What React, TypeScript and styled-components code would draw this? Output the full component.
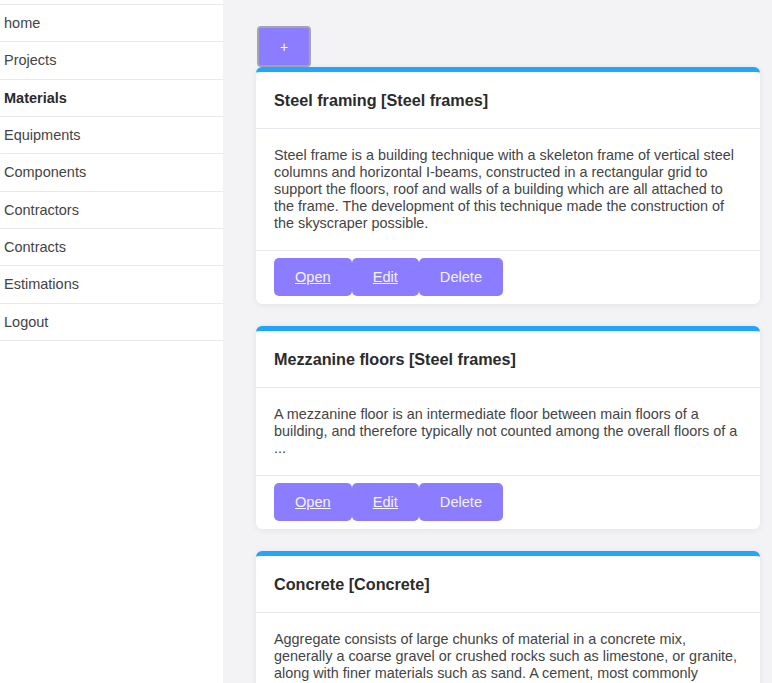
import styled, { createGlobalStyle } from 'styled-components';

const GlobalStyle = createGlobalStyle`
  html, body {
    margin: 0;
    padding: 0;
    height: 100%;
    overflow: hidden;
  }
  body {
    font-family: "Liberation Sans", Arial, sans-serif;
    background: #f3f3f6;
  }
`;

const navItems = [
  'home',
  'Projects',
  'Materials',
  'Equipments',
  'Components',
  'Contractors',
  'Contracts',
  'Estimations',
  'Logout',
];

const materials = [
  {
    name: 'Steel framing',
    category: 'Steel frames',
    text:
      'Steel frame is a building technique with a skeleton frame of vertical steel columns and horizontal I-beams, constructed in a rectangular grid to support the floors, roof and walls of a building which are all attached to the frame. The development of this technique made the construction of the skyscraper possible.',
  },
  {
    name: 'Mezzanine floors',
    category: 'Steel frames',
    text:
      'A mezzanine floor is an intermediate floor between main floors of a building, and therefore typically not counted among the overall floors of a ...',
  },
  {
    name: 'Concrete',
    category: 'Concrete',
    text:
      'Aggregate consists of large chunks of material in a concrete mix, generally a coarse gravel or crushed rocks such as limestone, or granite, along with finer materials such as sand. A cement, most commonly Portland cement, is the most prevalent kind of cement binder.',
  },
];

const App = () => {
  return (
    <>
      <GlobalStyle />
      <Layout>
        <Sidebar>
          {navItems.map((item) => (
            <NavItem key={item} $active={item === 'Materials'}>
              {item}
            </NavItem>
          ))}
        </Sidebar>

        <Main>
          <AddButton>+</AddButton>
          <CardList>
            {materials.map((m) => (
              <Card key={m.name}>
                <CardHeader>
                  {m.name} [{m.category}]
                </CardHeader>
                <CardBody>{m.text}</CardBody>
                <CardFooter>
                  <ActionButton as="a" href="#" $link>
                    Open
                  </ActionButton>
                  <ActionButton as="a" href="#" $link>
                    Edit
                  </ActionButton>
                  <ActionButton>Delete</ActionButton>
                </CardFooter>
              </Card>
            ))}
          </CardList>
        </Main>
      </Layout>
    </>
  );
};

const Layout = styled.div`
  display: flex;
  height: 683px;
  overflow: hidden;
`;

const Sidebar = styled.nav`
  width: 223px;
  flex-shrink: 0;
  background: #fff;
  padding-top: 4px;
  display: flex;
  flex-direction: column;
`;

const NavItem = styled.div<{ $active?: boolean }>`
  height: 36.33px;
  display: flex;
  align-items: center;
  padding-left: 4px;
  border-bottom: 1px solid #e9e9ed;
  font-size: 14.5px;
  color: ${(p) => (p.$active ? '#2b2b2b' : '#444')};
  font-weight: ${(p) => (p.$active ? 700 : 400)};

  &:first-child {
    border-top: 1px solid #e9e9ed;
  }
`;

const Main = styled.main`
  flex: 1;
  padding: 26px 12px 0 33px;
  overflow: hidden;
`;

const AddButton = styled.button`
  display: block;
  width: 54px;
  height: 41px;
  margin-left: 1px;
  background: #8c7cff;
  color: #fff;
  font-family: "Liberation Sans", Arial, sans-serif;
  font-size: 14px;
  border: 2px solid #a5a5ad;
  border-radius: 4px;
  padding: 0;
`;

const CardList = styled.div`
  display: flex;
  flex-direction: column;
  gap: 22px;
`;

const Card = styled.section`
  background: #fff;
  border-top: 5px solid #22a6fb;
  border-radius: 6px;
  box-shadow: 0 1px 6px rgba(40, 40, 80, 0.08);
  overflow: hidden;
`;

const CardHeader = styled.h2`
  margin: 0;
  padding: 0 18px;
  height: 56px;
  display: flex;
  align-items: center;
  font-size: 16.2px;
  font-weight: 700;
  color: #2b2b2b;
  border-bottom: 1px solid #e8e9ee;
`;

const CardBody = styled.p`
  margin: 0;
  padding: 18px;
  font-size: 14.4px;
  line-height: 17px;
  color: #444;
  border-bottom: 1px solid #e8e9ee;
`;

const CardFooter = styled.div`
  display: flex;
  padding: 7px 18px 8px;
`;

const ActionButton = styled.button<{ $link?: boolean }>`
  display: inline-flex;
  align-items: center;
  justify-content: center;
  height: 38px;
  padding: 0 21px;
  background: #8c7cff;
  color: #f4f3ff;
  font-family: "Liberation Sans", Arial, sans-serif;
  font-size: 14.6px;
  border: none;
  border-radius: 5px;
  text-decoration: ${(p) => (p.$link ? 'underline' : 'none')};
`;

export default App;
